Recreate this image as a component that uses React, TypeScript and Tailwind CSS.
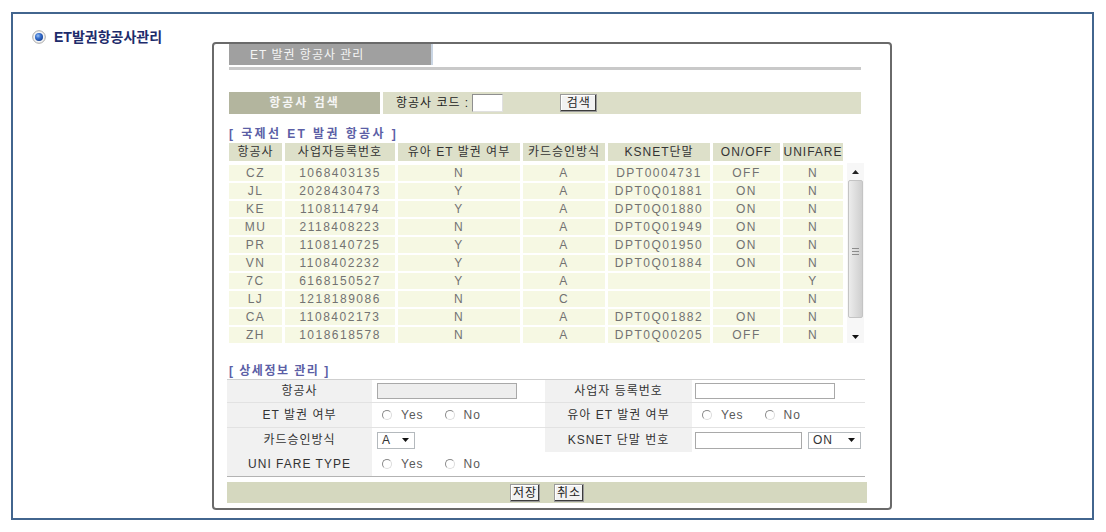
import React from "react";

const headers = [
  "항공사",
  "사업자등록번호",
  "유아 ET 발권 여부",
  "카드승인방식",
  "KSNET단말",
  "ON/OFF",
  "UNIFARE",
];

const rows = [
  ["CZ", "1068403135", "N", "A", "DPT0004731", "OFF", "N"],
  ["JL", "2028430473", "Y", "A", "DPT0Q01881", "ON", "N"],
  ["KE", "1108114794", "Y", "A", "DPT0Q01880", "ON", "N"],
  ["MU", "2118408223", "N", "A", "DPT0Q01949", "ON", "N"],
  ["PR", "1108140725", "Y", "A", "DPT0Q01950", "ON", "N"],
  ["VN", "1108402232", "Y", "A", "DPT0Q01884", "ON", "N"],
  ["7C", "6168150527", "Y", "A", "", "", "Y"],
  ["LJ", "1218189086", "N", "C", "", "", "N"],
  ["CA", "1108402173", "N", "A", "DPT0Q01882", "ON", "N"],
  ["ZH", "1018618578", "N", "A", "DPT0Q00205", "OFF", "N"],
];

const cols = "grid grid-cols-[53px_110px_122px_82px_102px_67px_60px] gap-x-[3px]";

function TitleRadio() {
  return (
    <svg width="14" height="14" viewBox="0 0 14 14">
      <defs>
        <radialGradient id="dot" cx="0.38" cy="0.35" r="0.7">
          <stop offset="0" stopColor="#9cc4f4" />
          <stop offset="0.45" stopColor="#3a72d0" />
          <stop offset="1" stopColor="#123f94" />
        </radialGradient>
      </defs>
      <circle cx="7" cy="7" r="6.3" fill="#f4f4f4" stroke="#a9a9a9" strokeWidth="1" />
      <circle cx="7" cy="7" r="4" fill="url(#dot)" />
    </svg>
  );
}

function Radio() {
  return (
    <span className="inline-block w-[10px] h-[10px] rounded-full border border-[#8a8a8a] border-r-[#dcdcdc] border-b-[#dcdcdc] bg-white" />
  );
}

function YesNo() {
  return (
    <div className="flex items-center pl-[10px] text-[12px] tracking-[1px] text-[#5a5a5a]">
      <Radio />
      <span className="ml-[9px]">Yes</span>
      <span className="ml-[21px] flex">
        <Radio />
      </span>
      <span className="ml-[9px]">No</span>
    </div>
  );
}

function Arrow() {
  return (
    <svg width="7" height="4" viewBox="0 0 7 4">
      <path d="M0 0h7L3.5 4z" fill="#111" />
    </svg>
  );
}

function Select({ value, w }: { value: string; w: string }) {
  return (
    <div
      className={`${w} h-[17px] border border-[#b4b9bd] bg-white flex items-center justify-between pl-[4px] pr-[5px] text-[12px] tracking-[1px] text-[#333]`}
    >
      <span>{value}</span>
      <Arrow />
    </div>
  );
}

function Btn({ label, w }: { label: string; w: string }) {
  return (
    <div
      className={`${w} h-[18px] flex items-center justify-center bg-[#f2f2f2] border border-[#9a9a9a] shadow-[inset_-1px_-1px_0_#3c3c3c,inset_1px_1px_0_#ffffff] text-[12px] tracking-[1px] text-[#222]`}
    >
      {label}
    </div>
  );
}

function Label({ text }: { text: string }) {
  return (
    <div className="bg-[#f1f1f1] flex items-center justify-center text-[12px] tracking-[1px] text-[#333]">
      {text}
    </div>
  );
}

function Scrollbar() {
  return (
    <div className="w-[17px] h-[180px] flex flex-col bg-[#f7f7f7]">
      <div className="h-[17px] flex items-center justify-center">
        <svg width="7" height="4" viewBox="0 0 7 4">
          <path d="M0 4h7L3.5 0z" fill="#222" />
        </svg>
      </div>
      <div className="h-[138px] mx-[1px] rounded-[2px] border border-[#c4c4c4] bg-gradient-to-r from-[#ececec] to-[#cfcfcf] flex items-center justify-center">
        <div className="flex flex-col gap-[2px] mt-[4px]">
          <div className="w-[7px] h-px bg-[#8c8c8c]" />
          <div className="w-[7px] h-px bg-[#8c8c8c]" />
          <div className="w-[7px] h-px bg-[#8c8c8c]" />
        </div>
      </div>
      <div className="flex-1 flex items-end justify-center pb-[4px]">
        <Arrow />
      </div>
    </div>
  );
}

export default function App() {
  return (
    <div className="w-[1106px] h-[532px] bg-white pt-[12px] pl-[11px] font-['Liberation_Sans','Noto_Sans_CJK_KR',sans-serif]">
      <div className="w-[1083px] h-[508px] border-2 border-[#42658e] flex">
        <div className="w-[199px] pl-[19px] pt-[16px]">
          <div className="flex items-center gap-[8px]">
            <TitleRadio />
            <span className="text-[14px] leading-[14px] font-bold text-[#1d2b6b]">
              ET발권항공사관리
            </span>
          </div>
        </div>

        <div className="w-[680px] h-[468px] mt-[28px] border-2 border-[#6a6a6a] rounded-[4px] pl-[15px]">
          {/* tab */}
          <div className="flex">
            <div className="w-[202px] h-[21px] bg-[#a0a0a0] pl-[21px] flex items-center text-[12px] tracking-[1px] text-[#f4f4f4]">
              ET 발권 항공사 관리
            </div>
            <div className="w-[2px] h-[21px] bg-[#c9d5e3]" />
          </div>
          <div className="w-[632px] h-[3px] mt-[2px] bg-[#c9c9c9]" />

          {/* search */}
          <div className="w-[632px] h-[22px] mt-[22px] flex gap-[3px]">
            <div className="w-[151px] bg-[#b3b59e] flex items-center justify-center text-[12px] font-bold tracking-[2px] text-[#f6f6f6]">
              항공사 검색
            </div>
            <div className="flex-1 bg-[#dcdec8] flex items-center pl-[13px] text-[12px] tracking-[1px] text-[#222]">
              <span>항공사 코드 :</span>
              <div className="w-[31px] h-[18px] ml-[3px] bg-white border border-[#8f8f8f] border-r-[#e0e0e0] border-b-[#e0e0e0]" />
              <div className="ml-[57px]">
                <Btn label="검색" w="w-[37px]" />
              </div>
            </div>
          </div>

          {/* airline list */}
          <div className="mt-[13px] h-[14px] leading-[14px] text-[12px] font-bold tracking-[2.4px] text-[#5c5fa6]">
            [ 국제선 ET 발권 항공사 ]
          </div>
          <div className={`${cols} mt-[2px] w-[614px]`}>
            {headers.map((h) => (
              <div
                key={h}
                className="h-[18px] bg-[#dde0c9] flex items-center justify-center text-[12px] tracking-[1px] text-[#333]"
              >
                {h}
              </div>
            ))}
          </div>
          <div className="flex gap-[4px] mt-[2px]">
            <div className="w-[614px] h-[180px]">
              {rows.map((r, i) => (
                <div key={i} className={`${cols} pt-[2px]`}>
                  {r.map((c, j) => (
                    <div
                      key={j}
                      className="h-[16px] bg-[#f6f8e3] flex items-center justify-center text-[12px] tracking-[1.5px] text-[#727272]"
                    >
                      {c}
                    </div>
                  ))}
                </div>
              ))}
            </div>
            <Scrollbar />
          </div>

          {/* detail */}
          <div className="mt-[21px] h-[14px] leading-[14px] text-[12px] font-bold tracking-[1.5px] text-[#5c5fa6]">
            [ 상세정보 관리 ]
          </div>
          <div className="ml-[-2px] w-[638px] mt-[1px] border-t border-t-[#cfcfcf] border-b border-b-[#b3b3b3]">
            <div className="grid grid-cols-[145px_173px_147px_173px] h-[23px] border-b border-b-[#e2e2e2]">
              <Label text="항공사" />
              <div className="flex items-center pl-[5px]">
                <div className="w-[140px] h-[16px] bg-[#eeeeee] border border-[#a9a9a9]" />
              </div>
              <Label text="사업자 등록번호" />
              <div className="flex items-center pl-[3px]">
                <div className="w-[140px] h-[16px] bg-white border border-[#a9a9a9]" />
              </div>
            </div>
            <div className="grid grid-cols-[145px_173px_147px_173px] h-[25px] border-b border-b-[#e2e2e2]">
              <Label text="ET 발권 여부" />
              <YesNo />
              <Label text="유아 ET 발권 여부" />
              <YesNo />
            </div>
            <div className="grid grid-cols-[145px_173px_147px_173px] h-[24px]">
              <Label text="카드승인방식" />
              <div className="flex items-center pl-[5px]">
                <Select value="A" w="w-[38px]" />
              </div>
              <Label text="KSNET 단말 번호" />
              <div className="flex items-center pl-[3px] gap-[6px]">
                <div className="w-[107px] h-[17px] bg-white border border-[#a9a9a9]" />
                <Select value="ON" w="w-[53px]" />
              </div>
            </div>
            <div className="grid grid-cols-[145px_173px_147px_173px] h-[24px]">
              <Label text="UNI FARE TYPE" />
              <YesNo />
              <div />
              <div />
            </div>
          </div>
          <div className="ml-[-2px] w-[640px] h-[21px] mt-[5px] bg-[#d5d8bf] flex items-center justify-center gap-[14px]">
            <Btn label="저장" w="w-[30px]" />
            <Btn label="취소" w="w-[30px]" />
          </div>
        </div>
      </div>
    </div>
  );
}
